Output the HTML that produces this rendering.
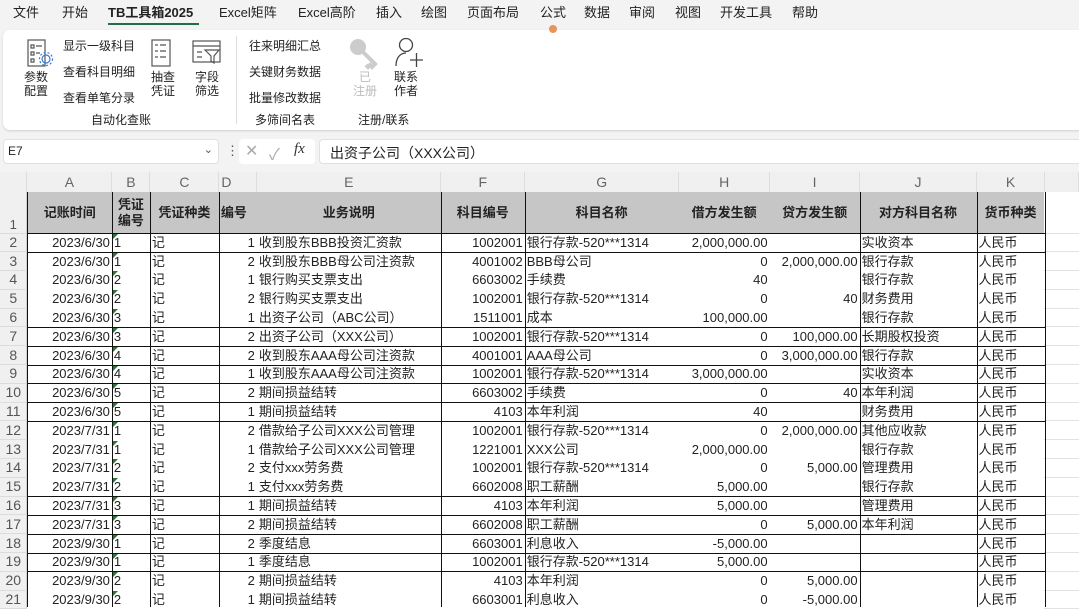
<!DOCTYPE html>
<html><head><meta charset="utf-8">
<style>
*{margin:0;padding:0;box-sizing:border-box}
body{width:1079px;height:607px;overflow:hidden;background:#f3f3f3;font-family:"Liberation Sans","Noto Sans CJK SC",sans-serif;color:#222;position:relative}
.tabs{position:absolute;top:0;left:0;height:26px;width:1079px;font-size:13px;z-index:5}
.tabs span{position:absolute;top:2px}
.rib{position:absolute;left:3px;top:30px;width:1090px;height:100px;background:#fff;border-radius:7px;box-shadow:0 1px 2px rgba(0,0,0,.15)}
.t{position:absolute;font-size:12px;white-space:nowrap;color:#222}
.fb{position:absolute;top:139px;height:25px;background:#fff;border:1px solid #e0e0e0;border-radius:4px}
table{position:absolute;left:0;top:172px;border-collapse:collapse;table-layout:fixed;font-size:13px}
td{padding:0 2px;white-space:nowrap;overflow:hidden;height:18.8px;line-height:17px;background:#fff}
td.r{text-align:right}
td.rn{background:#f0f0f0;color:#555;text-align:center;font-size:14px;border-bottom:1px solid #dcdcdc;border-right:1px solid #d0d0d0}
td.g{border-bottom:1px solid #e2e2e2;background:#fff}
tr.ch td{height:20px;background:#f0f0f0;color:#666;text-align:center;font-size:14px;border-right:1px solid #ddd}
tr.h td{height:41px;background:#c6c6c6;font-weight:bold;text-align:center;font-size:13px}
.vl{position:absolute;top:192px;width:1px;height:415px;background:#111}
.hl{position:absolute;left:27px;width:1018px;height:1px;background:#111}
.tri{position:absolute;left:113px;width:0;height:0;border-top:5px solid #1e7a35;border-right:5px solid transparent}
</style></head><body>
<div class="tabs">
<span style="left:13px">文件</span><span style="left:62px">开始</span>
<span style="left:108px;font-weight:bold">TB工具箱2025</span>
<div style="position:absolute;left:108px;top:23px;width:91px;height:2px;background:#1e7145"></div>
<span style="left:219px">Excel矩阵</span><span style="left:298px">Excel高阶</span>
<span style="left:376px">插入</span><span style="left:421px">绘图</span><span style="left:467px">页面布局</span>
<span style="left:540px">公式</span><span style="left:584px">数据</span><span style="left:629px">审阅</span>
<span style="left:675px">视图</span><span style="left:720px">开发工具</span><span style="left:792px">帮助</span>
<div style="position:absolute;left:549px;top:25px;width:8px;height:8px;border-radius:50%;background:#e8955a"></div>
</div>
<div class="rib">
<svg style="position:absolute;left:21px;top:8px" width="32" height="32" viewBox="0 0 32 32" fill="none" stroke="#555" stroke-width="1.2"><rect x="4" y="2" width="17" height="26"/><path d="M7 7h3v3H7zM12 8h6M7 14h3v3H7zM12 15h4M7 21h3v3H7z"/><circle cx="22" cy="21" r="4" stroke="#3a7bd5"/><circle cx="22" cy="21" r="6.5" stroke="#3a7bd5" stroke-dasharray="2 2"/></svg>
<div class="t" style="left:21px;top:40px;line-height:14px">参数<br>配置</div>
<div class="t" style="left:60px;top:7px">显示一级科目</div>
<div class="t" style="left:60px;top:33px">查看科目明细</div>
<div class="t" style="left:60px;top:59px">查看单笔分录</div>
<svg style="position:absolute;left:147px;top:8px" width="24" height="30" viewBox="0 0 24 30" fill="none" stroke="#555" stroke-width="1.2"><rect x="2" y="2" width="18" height="26"/><path d="M5 7h3M10 7h6M5 13h3M10 13h6M5 19h3M10 19h6"/></svg>
<div class="t" style="left:148px;top:40px;line-height:14px">抽查<br>凭证</div>
<svg style="position:absolute;left:188px;top:8px" width="32" height="30" viewBox="0 0 32 30" fill="none" stroke="#555" stroke-width="1.2"><rect x="2" y="3" width="27" height="21"/><path d="M2 8h27M6 14h5M6 19h5M14 12h14l-5 6v7l-3-2v-5z"/></svg>
<div class="t" style="left:192px;top:40px;line-height:14px">字段<br>筛选</div>
<div style="position:absolute;left:233px;top:6px;width:1px;height:88px;background:#ddd"></div>
<div class="t" style="left:246px;top:7px">往来明细汇总</div>
<div class="t" style="left:246px;top:33px">关键财务数据</div>
<div class="t" style="left:246px;top:59px">批量修改数据</div>
<svg style="position:absolute;left:343px;top:6px" width="34" height="34" viewBox="0 0 34 34"><circle cx="12" cy="11" r="8" fill="#ccc"/><path d="M17 16l12 12-3 3-2-2-2 2-2-2" fill="none" stroke="#ccc" stroke-width="4"/></svg>
<div class="t" style="left:350px;top:40px;line-height:14px;color:#bbb;text-align:center">已<br>注册</div>
<svg style="position:absolute;left:391px;top:6px" width="32" height="34" viewBox="0 0 32 34" fill="none" stroke="#444" stroke-width="1.3"><circle cx="12" cy="9" r="6.5"/><path d="M2 30c0-8 4-13 10-13M16 24h13M22.5 17v14"/></svg>
<div class="t" style="left:391px;top:40px;line-height:14px">联系<br>作者</div>
<div class="t" style="left:88px;top:81px">自动化查账</div>
<div class="t" style="left:252px;top:81px">多筛间名表</div>
<div class="t" style="left:355px;top:81px">注册/联系</div>
</div>
<div class="fb" style="left:3px;width:216px"><span style="position:absolute;left:4px;top:4px;font-size:12px">E7</span><span style="position:absolute;right:5px;top:3px;font-size:11px;color:#555">&#8964;</span></div>
<div style="position:absolute;left:226px;top:143px;font-size:13px;color:#555">&#8942;</div>
<div class="fb" style="left:239px;width:76px;border:none;color:#aaa"><span style="position:absolute;left:6px;top:2px;font-size:16px">&#10005;</span><span style="position:absolute;left:30px;top:2px;font-size:16px">&#10003;</span><span style="position:absolute;left:55px;top:2px;font-size:15px;font-style:italic;font-family:'Liberation Serif',serif;color:#333">fx</span></div>
<div class="fb" style="left:319px;width:770px"><span style="position:absolute;left:10px;top:3px;font-size:14px">出资子公司（XXX公司）</span></div>
<table>
<colgroup><col style="width:27px"><col style="width:85px"><col style="width:38px"><col style="width:69px"><col style="width:38px"><col style="width:184px"><col style="width:84px"><col style="width:154px"><col style="width:91px"><col style="width:90px"><col style="width:117px"><col style="width:68px"><col style="width:34px"></colgroup>
<tr class="ch"><td></td><td>A</td><td>B</td><td>C</td><td style="text-align:left">D</td><td>E</td><td>F</td><td>G</td><td>H</td><td>I</td><td>J</td><td>K</td><td></td></tr>
<tr class="h"><td class="rn" style="vertical-align:bottom;background:#f0f0f0;font-weight:normal">1</td><td>记账时间</td><td style="line-height:16px">凭证<br>编号</td><td>凭证种类</td><td style="text-align:left">编号</td><td>业务说明</td><td>科目编号</td><td>科目名称</td><td>借方发生额</td><td>贷方发生额</td><td>对方科目名称</td><td>货币种类</td><td class="g" style="background:#fff"></td></tr>
<tr><td class="rn">2</td><td class="r">2023/6/30</td><td>1</td><td>记</td><td class="r">1</td><td>收到股东BBB投资汇资款</td><td class="r">1002001</td><td>银行存款-520***1314</td><td class="r">2,000,000.00</td><td class="r"></td><td>实收资本</td><td>人民币</td><td class="g"></td></tr>
<tr><td class="rn">3</td><td class="r">2023/6/30</td><td>1</td><td>记</td><td class="r">2</td><td>收到股东BBB母公司注资款</td><td class="r">4001002</td><td>BBB母公司</td><td class="r">0</td><td class="r">2,000,000.00</td><td>银行存款</td><td>人民币</td><td class="g"></td></tr>
<tr><td class="rn">4</td><td class="r">2023/6/30</td><td>2</td><td>记</td><td class="r">1</td><td>银行购买支票支出</td><td class="r">6603002</td><td>手续费</td><td class="r">40</td><td class="r"></td><td>银行存款</td><td>人民币</td><td class="g"></td></tr>
<tr><td class="rn">5</td><td class="r">2023/6/30</td><td>2</td><td>记</td><td class="r">2</td><td>银行购买支票支出</td><td class="r">1002001</td><td>银行存款-520***1314</td><td class="r">0</td><td class="r">40</td><td>财务费用</td><td>人民币</td><td class="g"></td></tr>
<tr><td class="rn">6</td><td class="r">2023/6/30</td><td>3</td><td>记</td><td class="r">1</td><td>出资子公司（ABC公司）</td><td class="r">1511001</td><td>成本</td><td class="r">100,000.00</td><td class="r"></td><td>银行存款</td><td>人民币</td><td class="g"></td></tr>
<tr><td class="rn">7</td><td class="r">2023/6/30</td><td>3</td><td>记</td><td class="r">2</td><td>出资子公司（XXX公司）</td><td class="r">1002001</td><td>银行存款-520***1314</td><td class="r">0</td><td class="r">100,000.00</td><td>长期股权投资</td><td>人民币</td><td class="g"></td></tr>
<tr><td class="rn">8</td><td class="r">2023/6/30</td><td>4</td><td>记</td><td class="r">2</td><td>收到股东AAA母公司注资款</td><td class="r">4001001</td><td>AAA母公司</td><td class="r">0</td><td class="r">3,000,000.00</td><td>银行存款</td><td>人民币</td><td class="g"></td></tr>
<tr><td class="rn">9</td><td class="r">2023/6/30</td><td>4</td><td>记</td><td class="r">1</td><td>收到股东AAA母公司注资款</td><td class="r">1002001</td><td>银行存款-520***1314</td><td class="r">3,000,000.00</td><td class="r"></td><td>实收资本</td><td>人民币</td><td class="g"></td></tr>
<tr><td class="rn">10</td><td class="r">2023/6/30</td><td>5</td><td>记</td><td class="r">2</td><td>期间损益结转</td><td class="r">6603002</td><td>手续费</td><td class="r">0</td><td class="r">40</td><td>本年利润</td><td>人民币</td><td class="g"></td></tr>
<tr><td class="rn">11</td><td class="r">2023/6/30</td><td>5</td><td>记</td><td class="r">1</td><td>期间损益结转</td><td class="r">4103</td><td>本年利润</td><td class="r">40</td><td class="r"></td><td>财务费用</td><td>人民币</td><td class="g"></td></tr>
<tr><td class="rn">12</td><td class="r">2023/7/31</td><td>1</td><td>记</td><td class="r">2</td><td>借款给子公司XXX公司管理</td><td class="r">1002001</td><td>银行存款-520***1314</td><td class="r">0</td><td class="r">2,000,000.00</td><td>其他应收款</td><td>人民币</td><td class="g"></td></tr>
<tr><td class="rn">13</td><td class="r">2023/7/31</td><td>1</td><td>记</td><td class="r">1</td><td>借款给子公司XXX公司管理</td><td class="r">1221001</td><td>XXX公司</td><td class="r">2,000,000.00</td><td class="r"></td><td>银行存款</td><td>人民币</td><td class="g"></td></tr>
<tr><td class="rn">14</td><td class="r">2023/7/31</td><td>2</td><td>记</td><td class="r">2</td><td>支付xxx劳务费</td><td class="r">1002001</td><td>银行存款-520***1314</td><td class="r">0</td><td class="r">5,000.00</td><td>管理费用</td><td>人民币</td><td class="g"></td></tr>
<tr><td class="rn">15</td><td class="r">2023/7/31</td><td>2</td><td>记</td><td class="r">1</td><td>支付xxx劳务费</td><td class="r">6602008</td><td>职工薪酬</td><td class="r">5,000.00</td><td class="r"></td><td>银行存款</td><td>人民币</td><td class="g"></td></tr>
<tr><td class="rn">16</td><td class="r">2023/7/31</td><td>3</td><td>记</td><td class="r">1</td><td>期间损益结转</td><td class="r">4103</td><td>本年利润</td><td class="r">5,000.00</td><td class="r"></td><td>管理费用</td><td>人民币</td><td class="g"></td></tr>
<tr><td class="rn">17</td><td class="r">2023/7/31</td><td>3</td><td>记</td><td class="r">2</td><td>期间损益结转</td><td class="r">6602008</td><td>职工薪酬</td><td class="r">0</td><td class="r">5,000.00</td><td>本年利润</td><td>人民币</td><td class="g"></td></tr>
<tr><td class="rn">18</td><td class="r">2023/9/30</td><td>1</td><td>记</td><td class="r">2</td><td>季度结息</td><td class="r">6603001</td><td>利息收入</td><td class="r">-5,000.00</td><td class="r"></td><td></td><td>人民币</td><td class="g"></td></tr>
<tr><td class="rn">19</td><td class="r">2023/9/30</td><td>1</td><td>记</td><td class="r">1</td><td>季度结息</td><td class="r">1002001</td><td>银行存款-520***1314</td><td class="r">5,000.00</td><td class="r"></td><td></td><td>人民币</td><td class="g"></td></tr>
<tr><td class="rn">20</td><td class="r">2023/9/30</td><td>2</td><td>记</td><td class="r">2</td><td>期间损益结转</td><td class="r">4103</td><td>本年利润</td><td class="r">0</td><td class="r">5,000.00</td><td></td><td>人民币</td><td class="g"></td></tr>
<tr><td class="rn">21</td><td class="r">2023/9/30</td><td>2</td><td>记</td><td class="r">1</td><td>期间损益结转</td><td class="r">6603001</td><td>利息收入</td><td class="r">0</td><td class="r">-5,000.00</td><td></td><td>人民币</td><td class="g"></td></tr>
</table>
<div class="vl" style="left:27px"></div><div class="vl" style="left:112px"></div><div class="vl" style="left:150px"></div><div class="vl" style="left:219px"></div><div class="vl" style="left:441px"></div><div class="vl" style="left:525px"></div><div class="vl" style="left:860px"></div><div class="vl" style="left:977px"></div><div class="vl" style="left:1045px"></div>
<div class="hl" style="top:233px"></div><div class="hl" style="top:252px"></div><div class="hl" style="top:327px"></div><div class="hl" style="top:346px"></div><div class="hl" style="top:365px"></div><div class="hl" style="top:383px"></div><div class="hl" style="top:402px"></div><div class="hl" style="top:421px"></div><div class="hl" style="top:496px"></div><div class="hl" style="top:515px"></div><div class="hl" style="top:534px"></div><div class="hl" style="top:553px"></div><div class="hl" style="top:571px"></div>
<div class="tri" style="top:234px"></div><div class="tri" style="top:253px"></div><div class="tri" style="top:271px"></div><div class="tri" style="top:290px"></div><div class="tri" style="top:309px"></div><div class="tri" style="top:328px"></div><div class="tri" style="top:347px"></div><div class="tri" style="top:366px"></div><div class="tri" style="top:384px"></div><div class="tri" style="top:403px"></div><div class="tri" style="top:422px"></div><div class="tri" style="top:441px"></div><div class="tri" style="top:459px"></div><div class="tri" style="top:478px"></div><div class="tri" style="top:497px"></div><div class="tri" style="top:516px"></div><div class="tri" style="top:535px"></div><div class="tri" style="top:554px"></div><div class="tri" style="top:572px"></div><div class="tri" style="top:591px"></div>
</body></html>
